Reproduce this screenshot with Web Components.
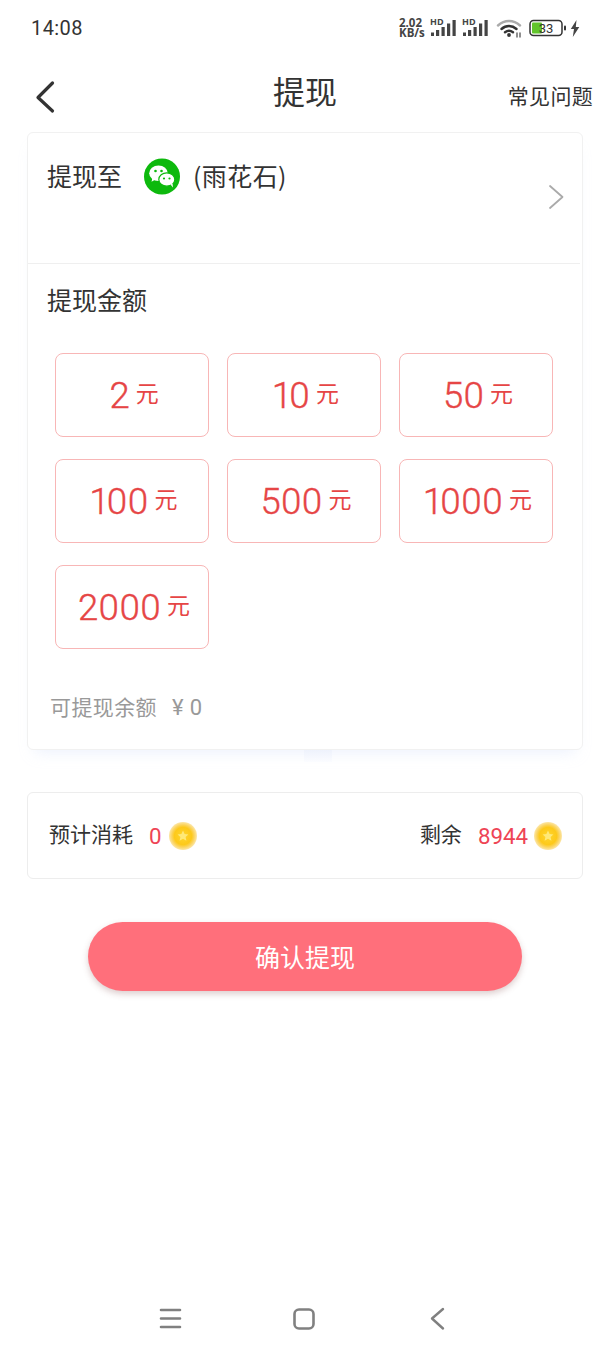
<!DOCTYPE html>
<html lang="zh">
<head>
<meta charset="utf-8">
<title>提现</title>
<style>
    html, body { margin: 0; padding: 0; background: #fff; }
    body {
        width: 610px;
        height: 1356px;
        overflow: hidden;
        font-family: Roboto, "Noto Sans CJK SC", sans-serif;
        color: #333;
        display: flex;
        flex-direction: column;
    }
</style>
</head>
<body>
<status-bar></status-bar>
<page-header title="提现" action="常见问题"></page-header>
<withdraw-card account="(雨花石)" balance="¥ 0" amounts="2,10,50,100,500,1000,2000"></withdraw-card>
<cost-card cost="0" remain="8944"></cost-card>
<confirm-button>确认提现</confirm-button>
<nav-bar></nav-bar>

<script>
const coinIcon = `
<svg width="28" height="28" viewBox="0 0 28 28">
    <defs>
        <radialGradient id="coin" cx="50%" cy="50%" r="50%">
            <stop offset="0%" stop-color="#ffd62e"/>
            <stop offset="62%" stop-color="#fdc91a"/>
            <stop offset="80%" stop-color="#fbd45e"/>
            <stop offset="100%" stop-color="#fce6a8"/>
        </radialGradient>
    </defs>
    <circle cx="14" cy="14" r="14" fill="url(#coin)"/>
    <path d="M14 8.600l1.600 3.500 3.800.4-2.800 2.500.8 3.700-3.400-1.900-3.400 1.900.8-3.700-2.800-2.500 3.800-.4z" fill="#ffe978"/>
</svg>`;

class StatusBar extends HTMLElement {
    constructor() {
        super();
        this.shadowDOM = this.attachShadow({mode: "open"});
    }

    connectedCallback() {
        this.shadowDOM.innerHTML = `
        <style>
            :host { display: flex; height: 56px; flex: none; align-items: center; justify-content: space-between; padding: 0 30px 0 31px; color: #333; }
            .time { font-size: 20px; letter-spacing: .4px; }
            .icons { display: flex; align-items: center; }
            .speed { font: 700 11.5px/10px "Open Sans", sans-serif; color: #444; width: 30px; }
            .sig { display: block; }
            .sig + .sig { margin-left: 5px; }
            .speed + .sig { margin-left: 1px; }
            .wifi { margin-left: 7px; }
            .batt { margin-left: 7px; }
            .bolt { margin-left: 4px; }
        </style>
        <span class="time">14:08</span>
        <div class="icons">
            <div class="speed">2.02<br>KB/s</div>
            ${this.signal()}
            ${this.signal()}
            <svg class="wifi" width="26" height="20" viewBox="0 0 26 20" fill="none" stroke-linecap="round">
                <path d="M2 7.500C8.500 1.500 17.500 1.500 24 7.500" stroke="#aaa" stroke-width="2.400"/>
                <path d="M5.500 11C10 7 16 7 20.500 11" stroke="#333" stroke-width="2.400"/>
                <path d="M9 14.300C11.500 12.300 14.500 12.300 17 14.300" stroke="#333" stroke-width="2.400"/>
                <circle cx="13" cy="17" r="1.900" fill="#333"/>
                <path d="M21 19v-4M24 19v-4" stroke="#555" stroke-width="1.300"/>
            </svg>
            <svg class="batt" width="37" height="18" viewBox="0 0 37 18">
                <rect x="1" y="1.500" width="32" height="15" rx="3.500" fill="#fff" stroke="#333" stroke-width="1.500"/>
                <rect x="3" y="3.500" width="10" height="11" rx="1" fill="#62c52c"/>
                <rect x="35" y="6.500" width="2" height="5" rx="1" fill="#333"/>
                <text x="17" y="14" text-anchor="middle" font-size="13" font-family="Roboto, sans-serif" fill="#333">33</text>
            </svg>
            <svg class="bolt" width="10" height="17" viewBox="0 0 10 17">
                <path d="M6.500 0L.8 9h3.200L2.800 17 9.300 7H5.800z" fill="#444"/>
            </svg>
        </div>`;
    }

    signal() {
        return `
        <svg class="sig" width="27" height="28" viewBox="0 -4 27 28">
            <text x="0" y="6.500" font-size="9" font-weight="700" font-family="'Open Sans', sans-serif" fill="#444">HD</text>
            <rect x="1" y="14.500" width="3" height="3.500" fill="#444"/>
            <rect x="6" y="12" width="3.200" height="6" fill="#444"/>
            <rect x="11.500" y="9" width="3.200" height="9" fill="#444"/>
            <rect x="17" y="5.500" width="3.200" height="12.500" fill="#444"/>
            <rect x="22.500" y="2" width="3.200" height="16" fill="#444"/>
        </svg>`;
    }
}

class PageHeader extends HTMLElement {
    constructor() {
        super();
        this.shadowDOM = this.attachShadow({mode: "open"});
    }

    connectedCallback() {
        this.shadowDOM.innerHTML = `
        <style>
            :host { display: grid; grid-template-columns: 1fr auto 1fr; align-items: center; height: 74px; flex: none; margin-bottom: 2px; color: #333; }
            svg { margin: 8px 0 0 35px; display: block; }
            h1 { margin: 0 0 6px; font-size: 32px; font-weight: 400; line-height: 68px; font-family: "Noto Sans CJK SC", sans-serif; }
            a { justify-self: end; margin: 3px 17px 0 0; font-size: 21px; letter-spacing: .3px; font-family: "Noto Sans CJK SC", sans-serif; }
        </style>
        <svg width="22" height="34" viewBox="0 0 22 34" fill="none">
            <path d="M17.500 3L3 17.500 17.500 31" stroke="#333" stroke-width="3.200" stroke-linecap="round" stroke-linejoin="round"/>
        </svg>
        <h1>${this.getAttribute("title")}</h1>
        <a>${this.getAttribute("action")}</a>`;
    }
}

class AmountOption extends HTMLElement {
    constructor() {
        super();
        this.attachShadow({mode: "open"}).innerHTML = `
        <style>
            :host { display: flex; align-items: center; justify-content: center; box-sizing: border-box; height: 84px; padding-left: 4px; border: 1px solid #f8b6b6; border-radius: 8px; color: #e64545; }
            .num { font-size: 36.500px; font-family: Roboto, sans-serif; font-weight: 300; font-variant-numeric: proportional-nums; -webkit-text-stroke: .4px #e64545; }
            .unit { font-size: 23px; margin: -6px 0 0 6px; font-family: "Noto Sans CJK SC", sans-serif; }
        </style>
        <span class="num"><slot></slot></span><span class="unit">元</span>`;
    }
}

class WithdrawCard extends HTMLElement {
    constructor() {
        super();
        this.shadowDOM = this.attachShadow({mode: "open"});
    }

    connectedCallback() {
        const options = this.getAttribute("amounts").split(",")
            .map(amount => `<amount-option>${amount}</amount-option>`).join("");
        this.shadowDOM.innerHTML = `
        <style>
            :host { display: block; position: relative; flex: none; box-sizing: border-box; width: 556px; height: 618px; margin-left: 27px; border: 1px solid #f1f1f1; border-radius: 6px; box-shadow: 0 10px 14px -8px rgba(200, 214, 250, .35); font-family: "Noto Sans CJK SC", sans-serif; color: #333; background: #fff; }
            :host::after { content: ""; position: absolute; left: 276px; top: 617px; width: 28px; height: 12px; background: linear-gradient(#eef2fc, #fbfcff); }
            .to { display: flex; box-sizing: border-box; height: 131px; margin-right: 2px; padding-left: 19px; border-bottom: 1px solid #efefef; position: relative; }
            .to .label { font-size: 25px; line-height: 36px; margin-top: 24px; }
            .wx { margin: 25px 0 0 22px; }
            .account { font-size: 25px; line-height: 36px; margin: 24px 0 0 13px; letter-spacing: .4px; }
            .more { position: absolute; right: 15px; top: 51px; }
            h2 { margin: 0; padding: 17px 0 0 19px; font-size: 25px; font-weight: 400; line-height: 36px; }
            .grid { display: grid; grid-template-columns: repeat(3, 154px); column-gap: 18px; row-gap: 22px; padding: 36px 0 0 27px; }
            .balance { display: flex; align-items: center; gap: 15px; padding: 40px 0 0 22px; font-size: 21px; line-height: 30px; color: #999; letter-spacing: .4px; }
            .balance b { font-weight: 400; font-family: Roboto, sans-serif; font-size: 22px; margin-top: 4px; }
        </style>
        <div class="to">
            <span class="label">提现至</span>
            <svg class="wx" width="36" height="37" viewBox="0 0 36 36">
                <circle cx="18" cy="18" r="18" fill="#0db90d"/>
                <ellipse cx="14.500" cy="14.800" rx="9.300" ry="7.800" fill="#fff"/>
                <path d="M8.500 19l-1 4.200 4.400-2.400z" fill="#fff"/>
                <ellipse cx="22.800" cy="21" rx="8" ry="6.700" fill="#fff" stroke="#0db90d" stroke-width="1.200"/>
                <path d="M26.500 26l2.500 3-.5-4z" fill="#fff"/>
                <circle cx="11.500" cy="12.500" r="1.300" fill="#0db90d"/>
                <circle cx="17.500" cy="12.500" r="1.300" fill="#0db90d"/>
                <circle cx="20" cy="20" r="1.100" fill="#0db90d"/>
                <circle cx="25.500" cy="20" r="1.100" fill="#0db90d"/>
            </svg>
            <span class="account">${this.getAttribute("account")}</span>
            <svg class="more" width="17" height="26" viewBox="0 0 17 26" fill="none">
                <path d="M2 2l12.500 11L2 24" stroke="#aaa" stroke-width="1.800" stroke-linecap="round" stroke-linejoin="round"/>
            </svg>
        </div>
        <h2>提现金额</h2>
        <div class="grid">${options}</div>
        <div class="balance"><span>可提现余额</span><b>${this.getAttribute("balance")}</b></div>`;
    }
}

class CostCard extends HTMLElement {
    constructor() {
        super();
        this.shadowDOM = this.attachShadow({mode: "open"});
    }

    connectedCallback() {
        this.shadowDOM.innerHTML = `
        <style>
            :host { display: flex; flex: none; align-items: center; justify-content: space-between; box-sizing: border-box; width: 556px; height: 87px; margin: 42px 0 0 27px; padding: 0 20px 0 21px; border: 1px solid #ededed; border-radius: 6px; font-family: "Noto Sans CJK SC", sans-serif; font-size: 21px; color: #333; }
            .side { display: flex; align-items: center; }
            .side > span:first-child { margin-top: -6px; }
            .val { font-family: Roboto, sans-serif; font-size: 22.300px; color: #ee4455; margin: 0 7px 0 16px; }
            .right .val { margin: 0 6px 0 16px; }
            svg { display: block; }
        </style>
        <div class="side"><span>预计消耗</span><span class="val">${this.getAttribute("cost")}</span>${coinIcon}</div>
        <div class="side right"><span>剩余</span><span class="val">${this.getAttribute("remain")}</span>${coinIcon}</div>`;
    }
}

class ConfirmButton extends HTMLElement {
    constructor() {
        super();
        this.attachShadow({mode: "open"}).innerHTML = `
        <style>
            :host { display: flex; flex: none; align-items: center; justify-content: center; box-sizing: border-box; width: 434px; height: 69px; margin: 43px 0 0 88px; padding-bottom: 2px; border-radius: 35px; background: #ff6f7b; color: #fff; font-size: 25px; font-family: "Noto Sans CJK SC", sans-serif; box-shadow: 0 3px 6px rgba(120, 60, 60, .25); }
        </style>
        <slot></slot>`;
    }
}

class NavBar extends HTMLElement {
    constructor() {
        super();
        this.attachShadow({mode: "open"}).innerHTML = `
        <style>
            :host { display: flex; flex: none; margin-top: auto; height: 49px; box-sizing: border-box; padding-left: 159px; align-items: flex-start; }
            svg { display: block; }
            .home { margin-left: 109px; }
            .back { margin-left: 112px; }
        </style>
        <svg width="24" height="24" viewBox="0 0 24 24" fill="none" stroke="#808080" stroke-width="2.600" stroke-linecap="round">
            <path d="M2 3h19M2 11.500h19M2 20h19"/>
        </svg>
        <svg class="home" width="24" height="24" viewBox="0 0 24 24" fill="none">
            <rect x="2.500" y="2.500" width="19" height="19" rx="4.500" stroke="#808080" stroke-width="2.600"/>
        </svg>
        <svg class="back" width="18" height="24" viewBox="0 0 18 24" fill="none" stroke="#808080" stroke-width="2.400" stroke-linecap="round" stroke-linejoin="round">
            <path d="M15 2L4 11.500 15 21.500"/>
        </svg>`;
    }
}

customElements.define("status-bar", StatusBar);
customElements.define("page-header", PageHeader);
customElements.define("amount-option", AmountOption);
customElements.define("withdraw-card", WithdrawCard);
customElements.define("cost-card", CostCard);
customElements.define("confirm-button", ConfirmButton);
customElements.define("nav-bar", NavBar);
</script>
</body>
</html>
